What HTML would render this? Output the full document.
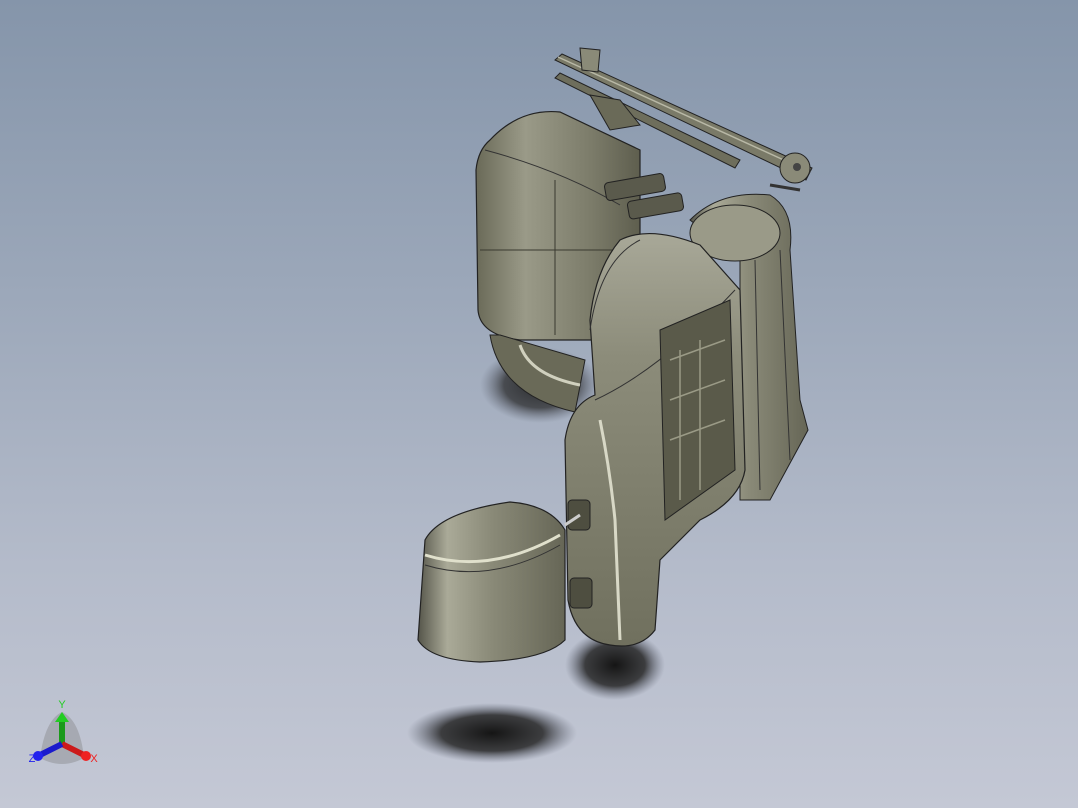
<!DOCTYPE html>
<html><head><meta charset="utf-8"><style>
html,body{margin:0;padding:0;}
body{width:1078px;height:808px;overflow:hidden;background:linear-gradient(180deg,#8595aa 0%,#9ba7b9 35%,#b4bbca 70%,#c4c8d5 100%);}
svg{position:absolute;left:0;top:0;}
</style></head><body>
<svg width="1078" height="808" viewBox="0 0 1078 808" font-family="Liberation Sans, sans-serif">
<defs>
<radialGradient id="sh" cx="50%" cy="50%" r="50%"><stop offset="0" stop-color="#151515"/><stop offset="0.6" stop-color="#252525" stop-opacity="0.85"/><stop offset="1" stop-color="#5a6070" stop-opacity="0"/></radialGradient>
<linearGradient id="ol" x1="0" y1="0" x2="1" y2="0"><stop offset="0" stop-color="#6a6a58"/><stop offset="0.3" stop-color="#9a9a88"/><stop offset="0.7" stop-color="#7c7c6a"/><stop offset="1" stop-color="#5e5e4e"/></linearGradient>
<linearGradient id="ol2" x1="0" y1="0" x2="1" y2="0"><stop offset="0" stop-color="#55554a"/><stop offset="0.2" stop-color="#aaaa98"/><stop offset="0.5" stop-color="#8a8a78"/><stop offset="1" stop-color="#666656"/></linearGradient>
<linearGradient id="ol3" x1="0" y1="0" x2="0" y2="1"><stop offset="0" stop-color="#a8a898"/><stop offset="0.3" stop-color="#8c8c7a"/><stop offset="1" stop-color="#70705e"/></linearGradient>
</defs>
<!-- shadows -->
<ellipse cx="492" cy="733" rx="85" ry="30" fill="url(#sh)"/>
<ellipse cx="615" cy="665" rx="50" ry="35" fill="url(#sh)"/>
<ellipse cx="540" cy="385" rx="60" ry="38" fill="url(#sh)" opacity="0.85"/>
<!-- rail -->
<path d="M555 60 L562 54 L812 168 L806 180 Z" fill="#7a7a68" stroke="#222" stroke-width="1"/>
<path d="M558 57 L810 172" stroke="#b8b8a6" stroke-width="1.5"/>
<path d="M555 78 L560 73 L740 160 L735 168 Z" fill="#6e6e5c" stroke="#222" stroke-width="1"/>
<path d="M580 48 L600 50 L598 72 L582 70 Z" fill="#8a8a78" stroke="#222"/>
<path d="M590 95 L620 100 L640 125 L610 130 Z" fill="#6a6a58" stroke="#222"/>
<circle cx="795" cy="168" r="15" fill="#8a8a78" stroke="#222"/>
<circle cx="797" cy="167" r="4" fill="#444"/>
<path d="M770 185 L800 190" stroke="#333" stroke-width="3"/>
<!-- rear backrest -->
<path d="M490 140 Q520 108 560 112 L640 150 L640 340 L520 340 Q480 335 478 310 L476 170 Q478 150 490 140 Z" fill="url(#ol)" stroke="#222" stroke-width="1.2"/>
<path d="M485 150 Q560 170 620 205" stroke="#333" fill="none"/>
<path d="M555 180 L555 335 M480 250 L620 250" stroke="#3a3a30" fill="none"/>
<path d="M490 335 Q500 395 575 412 L585 360 L500 335 Z" fill="#6a6a58" stroke="#222"/>
<path d="M520 345 Q530 375 580 385" stroke="#d0d0be" stroke-width="3" fill="none"/>
<!-- handles -->
<rect x="605" y="178" width="60" height="18" rx="4" fill="#5a5a4c" stroke="#222" transform="rotate(-10 635 187)"/>
<rect x="628" y="197" width="55" height="18" rx="4" fill="#5a5a4c" stroke="#222" transform="rotate(-10 655 206)"/>
<!-- right side structure -->
<path d="M690 220 Q720 190 770 195 Q795 210 790 250 L800 400 L808 430 L770 500 L740 500 L740 260 Z" fill="url(#ol2)" stroke="#222"/>
<path d="M755 260 L760 490 M780 250 L790 460" stroke="#333" fill="none"/>
<ellipse cx="735" cy="233" rx="45" ry="28" fill="#9a9a88" stroke="#222"/>
<!-- front seat back -->
<path d="M620 240 Q650 225 700 245 L740 290 L745 470 Q740 500 700 520 L660 560 L655 630 Q640 650 610 645 Q575 640 568 600 L565 440 Q570 405 595 395 L590 320 Q595 270 620 240 Z" fill="url(#ol3)" stroke="#222" stroke-width="1.2"/>
<path d="M590 330 Q600 260 640 240 M595 400 Q660 370 735 290" stroke="#333" fill="none"/>
<path d="M600 420 Q610 470 615 520 L620 640" stroke="#d8d8c6" stroke-width="3" fill="none"/>
<path d="M660 330 L730 300 L735 470 L665 520 Z" fill="#5a5a4a" stroke="#222"/>
<path d="M670 360 L725 340 M670 400 L725 380 M670 440 L725 420 M680 350 L680 500 M700 340 L700 490" stroke="#9a9a86" stroke-width="1.5"/>
<rect x="568" y="500" width="22" height="30" rx="4" fill="#4e4e40" stroke="#222"/>
<rect x="570" y="578" width="22" height="30" rx="4" fill="#4e4e40" stroke="#222"/>
<!-- headrest -->
<path d="M425 540 Q440 512 510 502 Q550 505 565 530 L565 640 Q545 660 480 662 Q430 660 418 640 Z" fill="url(#ol2)" stroke="#222" stroke-width="1.2"/>
<path d="M425 555 Q490 575 560 535" stroke="#e0e0cc" stroke-width="3" fill="none"/>
<path d="M425 565 Q490 585 560 545" stroke="#333" fill="none"/>
<path d="M565 525 L580 515" stroke="#ccc" stroke-width="3"/>
<!-- triad -->
<path d="M40 758 Q45 720 62 712 Q80 720 84 758 Q62 770 40 758 Z" fill="#777" opacity="0.35"/>
<path d="M62 744 L62 720" stroke="#1a9a1a" stroke-width="6"/>
<path d="M55 722 L62 712 L69 722 Z" fill="#22cc22"/>
<path d="M62 744 L84 755" stroke="#cc1a1a" stroke-width="6"/>
<circle cx="86" cy="756" r="5" fill="#ee2222"/>
<path d="M62 744 L40 755" stroke="#1a1acc" stroke-width="6"/>
<circle cx="38" cy="756" r="5" fill="#2222ee"/>
<text x="62" y="708" fill="#22cc22" font-size="11" text-anchor="middle">Y</text>
<text x="94" y="762" fill="#ee2222" font-size="11" text-anchor="middle">X</text>
<text x="32" y="762" fill="#2222ee" font-size="11" text-anchor="middle">Z</text>
</svg>
</body></html>
